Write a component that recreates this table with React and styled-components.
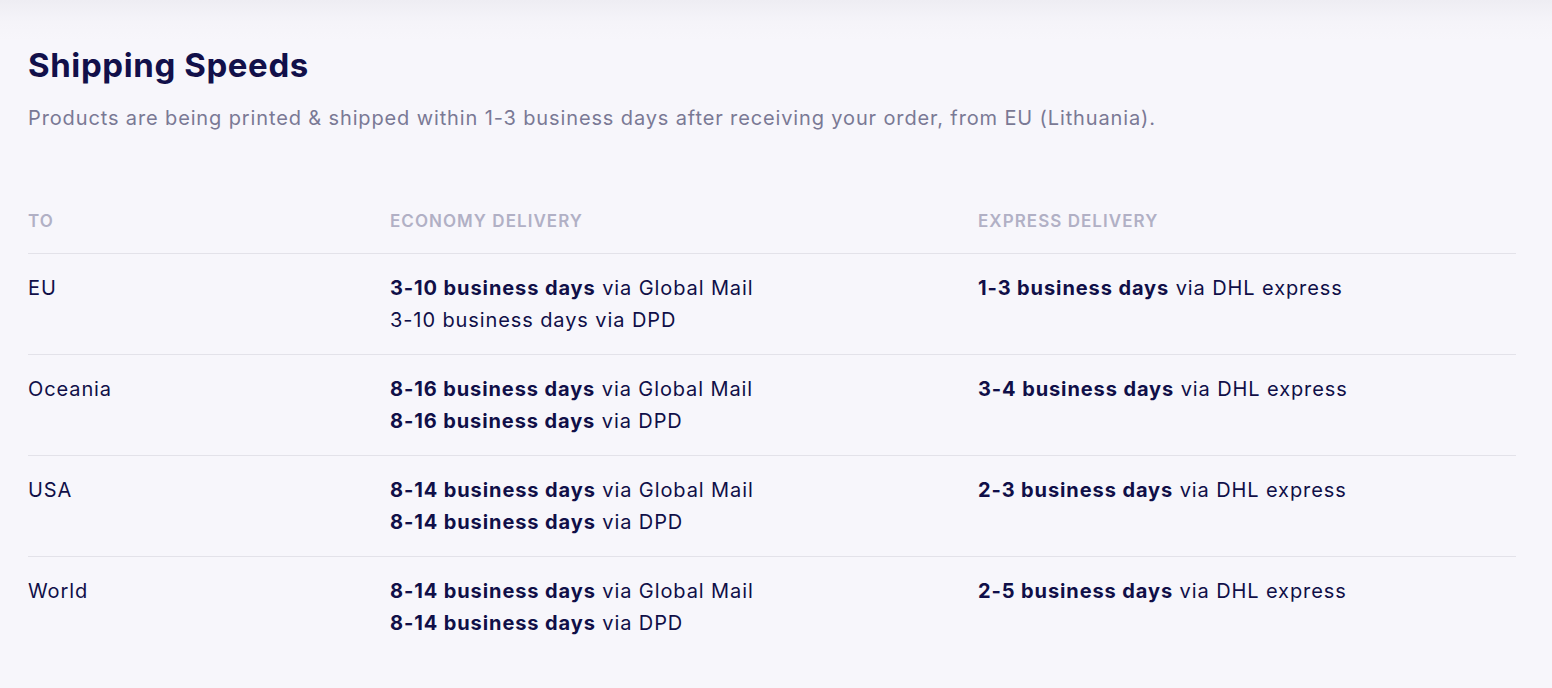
import React from "react";
import styled, { createGlobalStyle } from "styled-components";

const GlobalStyle = createGlobalStyle`
  html, body {
    margin: 0;
    padding: 0;
    background: #f7f6fb;
  }
  body {
    font-family: Inter, "Noto Sans", sans-serif;
    color: #100f48;
  }
`

const Page = styled.div`
  min-height: 688px;
  box-sizing: border-box;
  padding: 45px 36px 40px 28px;
  background: linear-gradient(to bottom, #eeedf3 0px, #f5f4f9 22px, #f7f6fb 40px);
`

const Title = styled.h2`
  margin: 0;
  font-size: 33px;
  line-height: 40px;
  font-weight: 700;
  color: #12104a;
  letter-spacing: 0.6px;
`

const Subtitle = styled.p`
  margin: 19px 0 0;
  font-size: 20px;
  line-height: 28px;
  letter-spacing: 0.87px;
  color: #7a7995;
`

const Table = styled.div`
  margin-top: 77px;
`

const Row = styled.div`
  display: grid;
  grid-template-columns: 362px 588px 1fr;
  border-top: ${(p) => (p.$first ? "none" : "1px solid #e3e2e9")};
  padding: ${(p) => (p.$head ? "0 0 20px" : "18px 0")};
`

const HeadCell = styled.div`
  font-size: 17px;
  line-height: 24px;
  font-weight: 600;
  letter-spacing: 1.05px;
  text-transform: uppercase;
  color: #b1b0c5;
`

const Cell = styled.div`
  font-size: 20px;
  line-height: 32px;
  letter-spacing: 0.9px;
  color: #100f48;
`

const Line = styled.div`
  b {
    font-weight: 700;
  }
`

const rows = [
  {
    to: "EU",
    economy: [
      { days: "3-10 business days", via: "Global Mail", bold: true },
      { days: "3-10 business days", via: "DPD", bold: false },
    ],
    express: "1-3 business days",
  },
  {
    to: "Oceania",
    economy: [
      { days: "8-16 business days", via: "Global Mail", bold: true },
      { days: "8-16 business days", via: "DPD", bold: true },
    ],
    express: "3-4 business days",
  },
  {
    to: "USA",
    economy: [
      { days: "8-14 business days", via: "Global Mail", bold: true },
      { days: "8-14 business days", via: "DPD", bold: true },
    ],
    express: "2-3 business days",
  },
  {
    to: "World",
    economy: [
      { days: "8-14 business days", via: "Global Mail", bold: true },
      { days: "8-14 business days", via: "DPD", bold: true },
    ],
    express: "2-5 business days",
  },
];

const App = () => {
  return (
    <>
      <GlobalStyle />
      <Page>
        <Title>Shipping Speeds</Title>
        <Subtitle>
          Products are being printed &amp; shipped within 1-3 business days after receiving your order, from EU (Lithuania).
        </Subtitle>
        <Table>
          <Row $head $first>
            <HeadCell>To</HeadCell>
            <HeadCell>Economy delivery</HeadCell>
            <HeadCell>Express delivery</HeadCell>
          </Row>
          {rows.map((item, index) => (
            <Row key={index}>
              <Cell>{item.to}</Cell>
              <Cell>
                {item.economy.map((e, i) => (
                  <Line key={i}>
                    {e.bold ? <b>{e.days}</b> : e.days} via {e.via}
                  </Line>
                ))}
              </Cell>
              <Cell>
                <Line>
                  <b>{item.express}</b> via DHL express
                </Line>
              </Cell>
            </Row>
          ))}
        </Table>
      </Page>
    </>
  );
};

export default App;
